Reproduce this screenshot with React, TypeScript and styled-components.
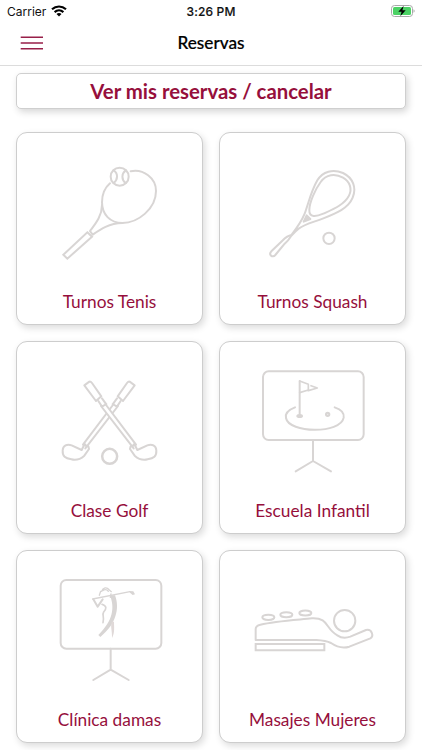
import React from 'react';
import styled, { createGlobalStyle } from 'styled-components';

const Global = createGlobalStyle`
  *, *::before, *::after { box-sizing: border-box; }
  body { margin: 0; background: #fff; font-family: Lato, sans-serif; overflow: hidden; }
`;

const Screen = styled.div`
  width: 422px;
  height: 750px;
  overflow: hidden;
  background: #fff;
`;

const StatusBar = styled.div`
  display: grid;
  grid-template-columns: 1fr auto 1fr;
  align-items: center;
  height: 22px;
  padding: 0 7px 0 7px;
  font-family: Inter, sans-serif;
  font-size: 12px;
  color: #111;
`;

const Carrier = styled.div`
  display: flex;
  align-items: center;
  gap: 5px;
  font-size: 12px;
`;

const Clock = styled.div`
  font-weight: 500;
  font-size: 12px;
  letter-spacing: 0.15px;
  -webkit-text-stroke: 0.15px #111;
`;

const BatterySlot = styled.div`
  display: flex;
  justify-content: flex-end;
`;

const NavBar = styled.header`
  display: grid;
  grid-template-columns: 1fr auto 1fr;
  align-items: center;
  height: 44px;
  padding: 0 20px 2px;
  border-bottom: 1px solid #dcdcdc;
`;

const MenuButton = styled.button`
  display: block;
  width: 24px;
  height: 14px;
  padding: 0;
  border: 0;
  background: none;
`;

const MenuGlyph = styled.svg`
  display: block;
  stroke: #981f49;
  stroke-width: 1.5;
`;

const Title = styled.h1`
  margin: 0;
  font-size: 17.2px;
  line-height: 22px;
  font-weight: 500;
  color: #000;
  -webkit-text-stroke: 0.2px #000;
`;

const Content = styled.main`
  padding: 7px 16px 0;
`;

const Banner = styled.button`
  display: block;
  width: 390px;
  height: 36px;
  padding: 0 0 1px;
  border: 1px solid #cfcfcf;
  border-radius: 5px;
  background: #fff;
  box-shadow: 2px 3px 7px rgba(0, 0, 0, 0.16);
  font-family: Lato, sans-serif;
  font-size: 20.35px;
  line-height: 34px;
  font-weight: 700;
  color: #960f3c;
`;

const Grid = styled.div`
  display: grid;
  grid-template-columns: 187px 187px;
  grid-auto-rows: 193px;
  gap: 16px;
  margin-top: 23px;
`;

const Card = styled.button`
  display: flex;
  flex-direction: column;
  align-items: center;
  padding: 0;
  border: 1px solid #cdcdcd;
  border-radius: 11px;
  background: #fff;
  box-shadow: 2px 3px 7px rgba(0, 0, 0, 0.14);
  font-family: Lato, sans-serif;
`;

const Drawing = styled.svg`
  display: block;
  width: 185px;
  height: 150px;
  fill: none;
  stroke: #d8d5d4;
  stroke-width: 6;
  stroke-linecap: round;
  stroke-linejoin: round;
`;

const Label = styled.span`
  margin-top: 7px;
  font-size: 17.3px;
  line-height: 24px;
  color: #960f3c;
  white-space: nowrap;
`;

const Wifi = () => (
  <svg width="16" height="12" viewBox="0 0 16 12" fill="none" stroke="#000" strokeWidth="2.1">
    <path d="M1 4.3C5 .5 11 .5 15 4.3" />
    <path d="M3.6 7.1c2.600-2.300 6.200-2.300 8.800 0" />
    <path d="M8 11.5 5.5 9c1.4-1.2 3.6-1.2 5 0z" fill="#000" stroke="none" />
  </svg>
);

const Battery = () => (
  <svg width="24" height="12" viewBox="0 0 24 12">
    <rect x=".5" y=".5" width="21" height="11" rx="3" fill="#fff" stroke="#a9a9a9" />
    <rect x="2" y="2" width="18" height="8" rx="1.5" fill="#4cd265" />
    <path d="M22.6 4.2c1.3.6 1.3 3 0 3.600z" fill="#999" />
    <path d="M12.7.7 7.3 6.700h3.300L9.300 11.300l5.400-6.100H11.400z" fill="#000" />
  </svg>
);

const Tennis = () => (
  <Drawing viewBox="21 9 555 450">
    <circle cx="329" cy="140" r="27" />
    <path d="M311 121C325 130 324 149 311 159M347 121C334 131 334 149 347 159" />
    <path d="M362 124C400 116 438 144 438 183C438 236 384 279 337 279C300 279 276 253 276 217C276 196 285 173 300 160" />
    <path d="M276 225C276 259 255 283 240 303M337 279C296 280 271 298 248 314M240 303l8 11" />
    <path d="M232 307l14 13-74 66-12-12z" strokeLinejoin="miter" />
  </Drawing>
);

const Squash = () => (
  <Drawing viewBox="24 9 555 450">
    <path d="M238 315C256 292 269 274 278 251C289 221 297 184 316 151C332 124 363 116 393 129C424 144 434 174 422 203C409 235 373 250 334 265C304 277 280 281 260 296C248 305 242 313 236 320Q230 330 218 341L190 375C181 385 169 374 178 364L211 332Q226 317 238 315" />
    <path d="M292 240C292 218 309 179 326 156C342 133 369 129 393 143C414 155 421 177 411 197C397 224 365 237 334 251C313 260 291 264 292 240Z" />
    <path d="M284 256l11 11-20 8z" fill="#d8d5d4" />
    <circle cx="351" cy="325" r="17" />
  </Drawing>
);

const Club = ({ flip = false }: { flip?: boolean }) => (
  <g transform={flip ? 'translate(597 0) scale(-1 1)' : undefined}>
    <path d="M223 151L238 140Q242 139 246 144L274 184L258 198Z" />
    <path d="M265 198l11 17M276 190l13 18M276 215l13-8M273 213l98 127M286 207l92 122" />
    <path d="M362 334q8 0 11-7L382 345L412 331C426 326 438 332 439 346C440 365 431 370 413 373C398 377 384 371 374 362L360 342Z" />
  </g>
);

const GolfClubs = () => (
  <Drawing viewBox="21 21 555 450">
    <Club flip />
    <path d="M287 219l24 31" stroke="#fff" strokeWidth="14" strokeLinecap="butt" />
    <Club />
    <circle cx="299" cy="364" r="22.500" strokeWidth="7.500" />
  </Drawing>
);

const Board = () => (
  <>
    <rect x="153" y="109" width="302" height="206" rx="17" />
    <path d="M303 315v63l-52 31M303 378l54 31" />
  </>
);

const GolfBoard = () => (
  <Drawing viewBox="24 21 555 450">
    <Board />
    <path d="M249 217C228 225 219 237 222 249C230 295 386 298 395 248C397 234 387 223 368 217" />
    <path d="M263 138l26 10v17l-26 8M297 152l19 7-27 8" strokeWidth="5" />
    <path d="M263 138v102" />
    <ellipse cx="263" cy="243" rx="8" ry="4" fill="#d8d5d4" strokeWidth="4" />
    <circle cx="347" cy="238" r="5" fill="#eeecec" />
  </Drawing>
);

const GolferBoard = () => (
  <Drawing viewBox="21 18 555 450">
    <g transform="translate(-1 -4)">
      <Board />
    </g>
    <path d="M275 139C279 127 290 125 298 135L304 140M278 137q10-7 17 2M272 139l-4 12M303 147l-2 10" strokeWidth="4" />
    <path d="M248 162L360 140" strokeWidth="4" />
    <path d="M357 138l13 1 5 9-7 2-8-7z" fill="#d8d5d4" stroke="none" />
    <path d="M250 163L263 185L278 163" strokeWidth="6" />
    <path d="M276 178C291 184 290 191 281 201C275 211 284 213 279 233" strokeWidth="5" />
    <path d="M300 151C314 188 310 226 265 270L271 276C318 239 330 190 315 151Z" fill="#d8d5d4" stroke="none" />
    <path d="M306 229C300 243 307 258 306 279C315 262 312 248 312 231Z" fill="#e0d9d8" stroke="none" />
  </Drawing>
);

const Massage = () => (
  <Drawing viewBox="24 18 555 450">
    <ellipse cx="169" cy="217" rx="18" ry="8" />
    <ellipse cx="223" cy="209" rx="18" ry="7.500" />
    <ellipse cx="280" cy="204" rx="18" ry="7.500" />
    <circle cx="398" cy="227" r="32" />
    <path d="M131 285V252C131 244 136 241 145 239C190 228 249 225 300 220C351 218 339 251 376 271C390 281 401 280 415 275L462 255C480 251 486 273 475 280L412 305C391 311 374 306 357 294C345 288 332 286 313 285Z" />
    <path d="M131 297h206v19H131z" strokeLinejoin="miter" />
  </Drawing>
);

const services = [
  { label: 'Turnos Tenis', Icon: Tennis },
  { label: 'Turnos Squash', Icon: Squash },
  { label: 'Clase Golf', Icon: GolfClubs },
  { label: 'Escuela Infantil', Icon: GolfBoard },
  { label: 'Clínica damas', Icon: GolferBoard },
  { label: 'Masajes Mujeres', Icon: Massage },
];

export default function App() {
  return (
    <Screen>
      <Global />
      <StatusBar>
        <Carrier>
          Carrier <Wifi />
        </Carrier>
        <Clock>3:26 PM</Clock>
        <BatterySlot>
          <Battery />
        </BatterySlot>
      </StatusBar>
      <NavBar>
        <MenuButton aria-label="Menú">
          <MenuGlyph width="24" height="14" viewBox="0 0 24 14">
            <path d="M.7 1.200H23M.7 6.900H23M.7 12.700H23" />
          </MenuGlyph>
        </MenuButton>
        <Title>Reservas</Title>
      </NavBar>
      <Content>
        <Banner>Ver mis reservas / cancelar</Banner>
        <Grid>
          {services.map(({ label, Icon }) => (
            <Card key={label}>
              <Icon />
              <Label>{label}</Label>
            </Card>
          ))}
        </Grid>
      </Content>
    </Screen>
  );
}
